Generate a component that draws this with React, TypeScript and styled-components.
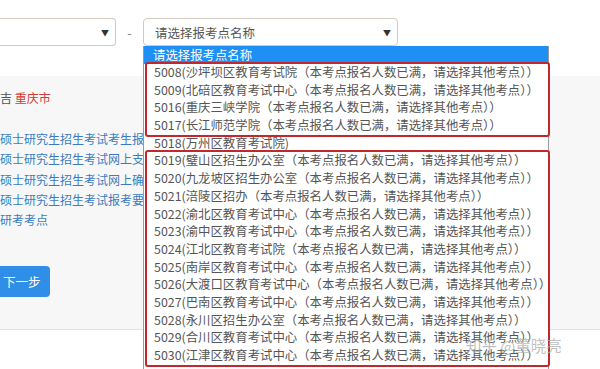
import React from "react";
import styled, { createGlobalStyle } from "styled-components";

const Global = createGlobalStyle`
  html, body { margin: 0; padding: 0; background: #ffffff; }
  body {
    width: 600px; height: 369px; overflow: hidden;
    font-family: "Noto Sans CJK SC", "Liberation Sans", sans-serif;
    color: #555;
  }
`;

const Page = styled.div`
  position: relative;
  width: 600px;
  height: 369px;
  overflow: hidden;
`;

const TopRow = styled.div`
  display: flex;
  align-items: center;
  gap: 7px;
  padding-top: 18px;
  height: 28px;
`;

const SelectBox = styled.div<{ $w: number; $cut?: boolean }>`
  box-sizing: border-box;
  width: ${(p) => p.$w}px;
  height: 28px;
  border: 1px solid #cfc9c2;
  border-left-width: ${(p) => (p.$cut ? 0 : 1)}px;
  border-radius: ${(p) => (p.$cut ? "0 4px 4px 0" : "4px")};
  display: flex;
  align-items: center;
  justify-content: space-between;
  padding: 0 6px 0 11px;
  font-size: 12.5px;
  color: #555;
  background: #fff;
`;

const Arrow = styled.span`
  font-size: 8px;
  color: #333;
`;

const Dash = styled.span`
  width: 13px;
  text-align: center;
  font-size: 13px;
  color: #888;
`;

const Panel = styled.div`
  margin-top: 30px;
  height: 254px;
  box-sizing: border-box;
  background: #f7f7f7;
  border-bottom: 1px solid #e2e2e2;
  padding-top: 14px;
  display: flex;
  flex-direction: column;
`;

const Place = styled.div`
  font-size: 12px;
  line-height: 16px;
  color: #555;
  white-space: nowrap;
`;

const City = styled.span`
  color: #cf3c35;
`;

const Links = styled.ul`
  list-style: none;
  margin: 23px 0 0;
  padding: 0;
  display: flex;
  flex-direction: column;
`;

const LinkItem = styled.li`
  font-size: 12px;
  line-height: 20.3px;
  color: #3b7cc0;
  white-space: nowrap;
`;

const NextButton = styled.div`
  margin-top: 36px;
  width: 50px;
  height: 31px;
  box-sizing: border-box;
  background: #2f8fe6;
  border-radius: 0 4px 4px 0;
  color: #fff;
  font-size: 12.5px;
  display: flex;
  align-items: center;
  padding-left: 3px;
`;

const Dropdown = styled.div`
  position: absolute;
  left: 143px;
  top: 46px;
  width: 406px;
  height: 340px;
  box-sizing: border-box;
  background: #fff;
  border: 1px solid #9a9a9a;
  border-top: 0;
  font-family: "Noto Sans CJK SC", "Liberation Sans", sans-serif;
  font-size: 12.4px;
`;

const Header = styled.div`
  height: 18px;
  line-height: 18px;
  background: #1e8ff5;
  color: #fff;
  padding-left: 9px;
  font-size: 12.4px;
`;

const Group = styled.div<{ $boxed?: boolean }>`
  margin: 0 0 0 3px;
  outline: ${(p) => (p.$boxed ? "2px solid #c0282e" : "none")};
  outline-offset: 0px;
  border-radius: 1px;
`;

const Option = styled.div`
  height: 17.7px;
  line-height: 17.7px;
  padding-left: 7px;
  color: #555;
  white-space: nowrap;
`;

const Watermark = styled.div`
  position: absolute;
  left: 466px;
  top: 334px;
  font-size: 15.5px;
  color: rgba(175, 175, 175, 0.8);
  white-space: nowrap;
  font-family: "Noto Sans CJK SC", sans-serif;
`;

const FULL = "（本考点报名人数已满，请选择其他考点））";

const groupA = [
  "5008(沙坪坝区教育考试院",
  "5009(北碚区教育考试中心",
  "5016(重庆三峡学院",
  "5017(长江师范学院",
];
const groupB = [
  "5019(璧山区招生办公室",
  "5020(九龙坡区招生办公室",
  "5021(涪陵区招办",
  "5022(渝北区教育考试中心",
  "5023(渝中区教育考试中心",
  "5024(江北区教育考试院",
  "5025(南岸区教育考试中心",
  "5026(大渡口区教育考试中心",
  "5027(巴南区教育考试中心",
  "5028(永川区招生办公室",
  "5029(合川区教育考试中心",
  "5030(江津区教育考试中心",
];

const links = [
  "硕士研究生招生考试考生报名须知",
  "硕士研究生招生考试网上支付说明",
  "硕士研究生招生考试网上确认须知",
  "硕士研究生招生考试报考要求",
  "研考考点",
];

export default function App() {
  return (
    <Page>
      <Global />
      <TopRow>
        <SelectBox $w={116} $cut>
          <span />
          <Arrow>▼</Arrow>
        </SelectBox>
        <Dash>-</Dash>
        <SelectBox $w={255}>
          <span>请选择报考点名称</span>
          <Arrow>▼</Arrow>
        </SelectBox>
      </TopRow>
      <Panel>
        <Place>
          吉 <City>重庆市</City>
        </Place>
        <Links>
          {links.map((l) => (
            <LinkItem key={l}>{l}</LinkItem>
          ))}
        </Links>
        <NextButton>下一步</NextButton>
      </Panel>
      <Dropdown>
        <Header>请选择报考点名称</Header>
        <Group $boxed>
          {groupA.map((t) => (
            <Option key={t}>{t + FULL}</Option>
          ))}
        </Group>
        <Group>
          <Option>5018(万州区教育考试院)</Option>
        </Group>
        <Group $boxed>
          {groupB.map((t) => (
            <Option key={t}>{t + FULL}</Option>
          ))}
        </Group>
      </Dropdown>
      <Watermark>知乎 @董晓亮</Watermark>
    </Page>
  );
}
